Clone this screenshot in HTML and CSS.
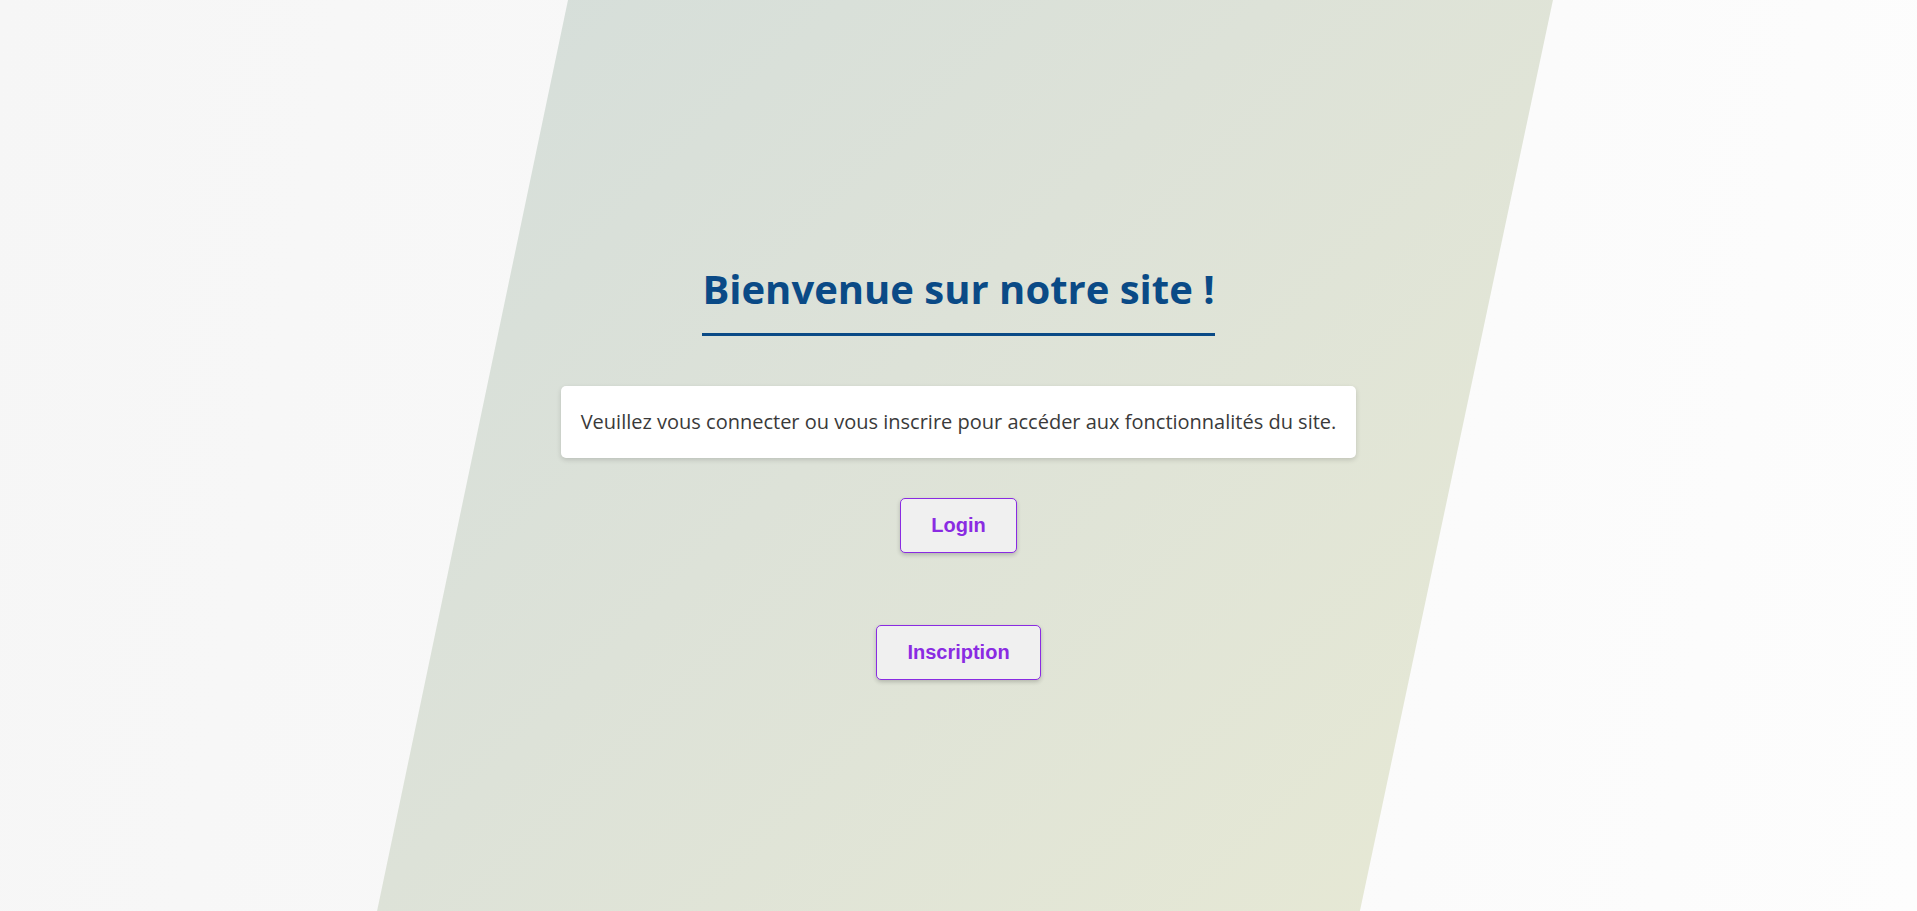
FILE: index.html
```html
<!DOCTYPE html>
<html lang="fr">
<head>
<meta charset="utf-8">
<title>Bienvenue</title>
<link rel="stylesheet" href="styles.css">
</head>
<body>
<div class="stripe"></div>
<main class="welcome">
  <h1 class="title">Bienvenue sur notre site !</h1>
  <div class="card">Veuillez vous connecter ou vous inscrire pour accéder aux fonctionnalités du site.</div>
  <div class="actions">
    <a class="btn" href="#">Login</a>
    <a class="btn" href="#">Inscription</a>
  </div>
</main>
</body>
</html>
```
FILE: styles.css
```css
html, body {
  margin: 0;
  padding: 0;
  height: 100%;
}
body {
  background: linear-gradient(100deg, #f6f6f6 0%, #f9f9f9 50%, #fdfdfd 100%);
  font-family: "Open Sans", "Liberation Sans", sans-serif;
  overflow: hidden;
  position: relative;
}
.stripe {
  position: absolute;
  inset: 0;
  background: linear-gradient(135deg, #d1dcdb 0%, #dde2d8 45%, #eaebd3 100%);
  clip-path: polygon(29.63% 0, 81.01% 0, 70.94% 100%, 19.67% 100%);
  z-index: 0;
}
.welcome {
  position: relative;
  z-index: 1;
  display: flex;
  flex-direction: column;
  align-items: center;
  padding-top: 261px;
}
.title {
  margin: 0;
  font-size: 40px;
  font-weight: 700;
  line-height: normal;
  color: #0a4a86;
  padding: 0 0 17px;
  border-bottom: 3px solid #0a4a86;
}
.card {
  margin-top: 50px;
  background: #ffffff;
  color: #3a3a3a;
  font-size: 20px;
  line-height: 32px;
  padding: 20px;
  border-radius: 5px;
  box-shadow: 0 2px 5px rgba(0, 0, 0, 0.15);
}
.actions {
  display: flex;
  flex-direction: column;
  align-items: center;
  gap: 72px;
  margin-top: 40px;
}
.btn {
  display: inline-block;
  font-family: "Liberation Sans", Arial, sans-serif;
  font-weight: 700;
  font-size: 20px;
  line-height: 23px;
  color: #8a2be2;
  text-decoration: none;
  background: #f0f0f0;
  border: 1px solid #8a2be2;
  border-radius: 5px;
  padding: 15px 30px;
  box-shadow: 0 2px 4px rgba(0, 0, 0, 0.2);
}
```
